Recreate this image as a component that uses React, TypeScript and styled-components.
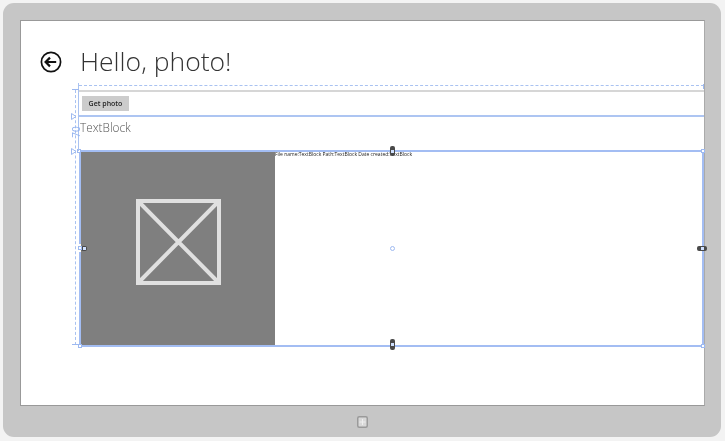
import React from "react";
import styled, { createGlobalStyle } from "styled-components";

const Global = createGlobalStyle`
  html, body { margin: 0; padding: 0; background: #f3f3f3; }
  body { width: 725px; height: 441px; overflow: hidden; font-family: "Open Sans", "Liberation Sans", sans-serif; }
`;

const Device = styled.div`
  box-sizing: border-box;
  width: 718px;
  height: 434px;
  margin: 3px 0 0 3px;
  padding: 17px 16px 31px 17px;
  background: #c6c6c6;
  border-radius: 11px;
  position: relative;
  display: flex;
`;

const Screen = styled.main`
  flex: 1;
  background: #fff;
  border: 1px solid #999;
  border-right-color: #aaa;
  position: relative;
  display: flex;
  flex-direction: column;
`;

const Header = styled.header`
  height: 64px;
  box-sizing: border-box;
  padding: 18px 0 0 19px;
  display: flex;
  align-items: center;
  gap: 18px;
`;

const BackIcon = styled.svg`
  width: 22px;
  height: 22px;
  flex: none;
`;

const Title = styled.h1`
  margin: 0 0 2px;
  font-family: "Open Sans", "Liberation Sans", sans-serif;
  font-weight: 300;
  font-size: 26.5px;
  line-height: 40px;
  color: #333;
  will-change: transform;
`;

const Content = styled.div`
  margin-left: 58px;
  display: flex;
  flex-direction: column;
  flex: 1;
`;

const TopSpace = styled.div`
  height: 4px;
  border-top: 1px dashed #a9c2f1;
`;

const ButtonRow = styled.div`
  height: 23px;
  border-top: 2px solid #d6d6d6;
  border-bottom: 2px solid #adc5f2;
  display: flex;
  align-items: center;
  padding-left: 3px;
`;

const PhotoButton = styled.button`
  width: 47px;
  height: 15px;
  padding: 0;
  border: 0;
  background: #cccccc;
  color: #222;
  font-family: "Open Sans", "Liberation Sans", sans-serif;
  font-weight: 600;
  font-size: 7px;
  will-change: transform;
`;

const Caption = styled.div`
  height: 33px;
  padding-left: 1px;
  font-family: "Open Sans", "Liberation Sans", sans-serif;
  font-weight: 300;
  font-size: 11.8px;
  line-height: 21px;
  color: #555;
  will-change: transform;
`;

const PhotoRow = styled.section`
  height: 193px;
  display: flex;
  position: relative;
  border: 2px solid #a3bdf3;
`;

const ImageBox = styled.div`
  width: 194px;
  box-sizing: border-box;
  padding-bottom: 14px;
  background: #7f7f7f;
  display: flex;
  align-items: center;
  justify-content: center;
`;

const Placeholder = styled.svg`
  width: 85px;
  height: 86px;
`;

const Info = styled.div`
  font-family: "Open Sans", "Liberation Sans", sans-serif;
  font-size: 5px;
  line-height: 5px;
  color: #222;
  white-space: nowrap;
  will-change: transform;
`;

const Overlay = styled.div`
  position: absolute;
  inset: 0;
  pointer-events: none;
`;

const LeftRule = styled.div`
  position: absolute;
  left: 57px;
  top: 62px;
  height: 68px;
  border-left: 1px solid #a9c2f1;
`;

const DashRule = styled.div`
  position: absolute;
  left: 54px;
  top: 69px;
  height: 255px;
  border-left: 1px dashed #a9c2f1;
`;

const TickTop = styled.div`
  position: absolute;
  left: 51px;
  top: 68px;
  width: 7px;
  border-top: 1px solid #9db9f0;
`;

const TickBottom = styled(TickTop)`
  top: 323px;
  width: 8px;
`;

const EndCap = styled.div`
  position: absolute;
  right: 0;
  top: 63px;
  height: 5px;
  border-right: 1px solid #9db9f0;
`;

const Handle = styled.div`
  position: absolute;
  box-sizing: border-box;
  width: 4px;
  height: 4px;
  background: #fff;
  border: 1px solid #9db9f0;
`;

const HandleNW = styled(Handle)`
  left: -4px;
  top: -3px;
`;
const HandleNE = styled(Handle)`
  right: -3px;
  top: -3px;
`;
const HandleSW = styled(Handle)`
  left: -3px;
  bottom: -3px;
`;
const HandleSE = styled(Handle)`
  right: -3px;
  bottom: -3px;
`;
const HandleW = styled(Handle)`
  left: -3px;
  top: calc(50% - 3px);
  box-shadow: -3px 0 0 2px #fff;
`;
const HandleCenter = styled(Handle)`
  left: calc(50% - 2px);
  top: calc(50% - 3px);
  width: 5px;
  height: 5px;
  border-radius: 50%;
`;

const Pin = styled.div`
  position: absolute;
  background: #4a4a4a;
  border-radius: 2px;
  display: flex;
  align-items: center;
  justify-content: center;
`;

const PinDot = styled.div`
  width: 3px;
  height: 3px;
  background: #cfe0ff;
`;

const PinTop = styled(Pin)`
  left: calc(50% - 2px);
  top: -6px;
  width: 5px;
  height: 10px;
`;
const PinBottom = styled(Pin)`
  left: calc(50% - 2px);
  bottom: -5px;
  width: 5px;
  height: 11px;
`;
const PinRight = styled(Pin)`
  right: -5px;
  top: calc(50% - 3px);
  width: 10px;
  height: 5px;
`;
const PinLeft = styled(Pin)`
  left: 0;
  top: calc(50% - 3px);
  width: 6px;
  height: 5px;
`;

const Marker = styled.svg`
  position: absolute;
  left: 50px;
  width: 6px;
  height: 7px;
`;
const MarkerUpper = styled(Marker)`
  top: 92px;
`;
const MarkerLower = styled(Marker)`
  top: 127px;
`;

const Measure = styled.span`
  position: absolute;
  left: 49px;
  top: 106px;
  font-family: "Open Sans", "Liberation Sans", sans-serif;
  font-size: 10px;
  line-height: 10px;
  color: #8fb0ef;
  transform: rotate(-90deg);
`;

const WinButton = styled.svg`
  position: absolute;
  left: 354px;
  top: 413px;
  width: 11px;
  height: 12px;
`;

const tri = <path d="M.5.5 5 3.5.5 6.5Z" fill="#fff" stroke="#9db9f0" />;

export default function App() {
  return (
    <>
      <Global />
      <Device>
        <Screen>
          <Header>
            <BackIcon viewBox="0 0 22 22">
              <circle cx="11" cy="11" r="9.6" fill="none" stroke="#111" strokeWidth="1.7" />
              <path d="M16.2 11H6M10 6.6 5.6 11l4.4 4.4" fill="none" stroke="#111" strokeWidth="2.2" />
            </BackIcon>
            <Title>Hello, photo!</Title>
          </Header>
          <Content>
            <TopSpace />
            <ButtonRow>
              <PhotoButton>Get photo</PhotoButton>
            </ButtonRow>
            <Caption>TextBlock</Caption>
            <PhotoRow>
              <ImageBox>
                <Placeholder viewBox="0 0 85 86">
                  <path d="M2 2H83V84H2ZM4 4 81 82M81 4 4 82" fill="none" stroke="#e0e0e0" strokeWidth="4" />
                </Placeholder>
              </ImageBox>
              <Info>File name:TextBlock Path:TextBlock Date created:TextBlock</Info>
              <HandleNW />
              <HandleNE />
              <HandleSW />
              <HandleSE />
              <HandleCenter />
              <PinTop><PinDot /></PinTop>
              <PinBottom><PinDot /></PinBottom>
              <PinRight><PinDot /></PinRight>
              <PinLeft><PinDot /></PinLeft>
              <HandleW />
            </PhotoRow>
          </Content>
          <Overlay>
            <EndCap />
            <LeftRule />
            <DashRule />
            <TickTop />
            <TickBottom />
            <MarkerUpper viewBox="0 0 6 7">{tri}</MarkerUpper>
            <MarkerLower viewBox="0 0 6 7">{tri}</MarkerLower>
            <Measure>70</Measure>
          </Overlay>
        </Screen>
        <WinButton viewBox="0 0 11 12">
          <rect x=".75" y=".75" width="9.5" height="10.5" rx="1.5" fill="#d8d8d8" stroke="#9a9a9a" strokeWidth="1.5" />
          <path d="M2.5 6H8.5M5.5 3V9" stroke="#eee" strokeWidth="1" />
        </WinButton>
      </Device>
    </>
  );
}
